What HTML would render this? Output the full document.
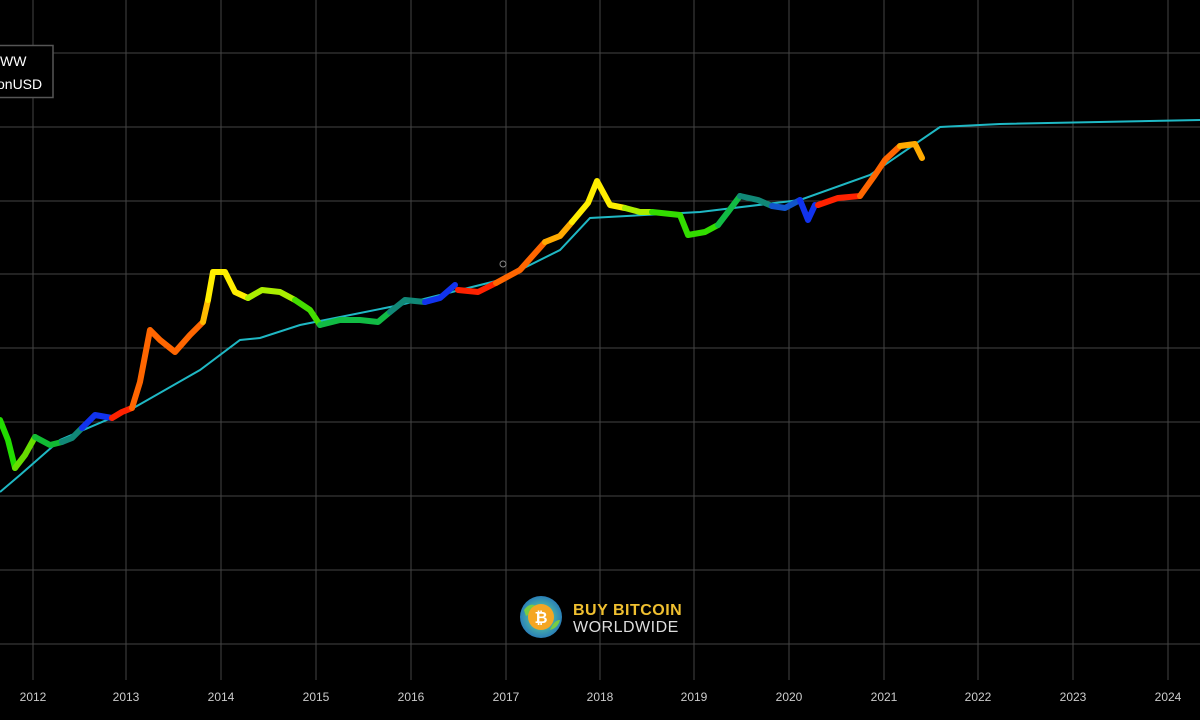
<!DOCTYPE html>
<html><head><style>
html,body{margin:0;padding:0;background:#000;width:1200px;height:720px;overflow:hidden;font-family:"Liberation Sans",sans-serif}
</style></head><body>
<svg width="1200" height="720" xmlns="http://www.w3.org/2000/svg" style="position:absolute;left:0;top:0">
<rect width="1200" height="720" fill="#000"/>
<g stroke="#444" stroke-width="1">
<line x1="33" y1="0" x2="33" y2="680"/><line x1="126" y1="0" x2="126" y2="680"/><line x1="221" y1="0" x2="221" y2="680"/><line x1="316" y1="0" x2="316" y2="680"/><line x1="411" y1="0" x2="411" y2="680"/><line x1="506" y1="0" x2="506" y2="680"/><line x1="600" y1="0" x2="600" y2="680"/><line x1="694" y1="0" x2="694" y2="680"/><line x1="789" y1="0" x2="789" y2="680"/><line x1="884" y1="0" x2="884" y2="680"/><line x1="978" y1="0" x2="978" y2="680"/><line x1="1073" y1="0" x2="1073" y2="680"/><line x1="1168" y1="0" x2="1168" y2="680"/>
<line x1="0" y1="53" x2="1200" y2="53"/><line x1="0" y1="127" x2="1200" y2="127"/><line x1="0" y1="201" x2="1200" y2="201"/><line x1="0" y1="274" x2="1200" y2="274"/><line x1="0" y1="348" x2="1200" y2="348"/><line x1="0" y1="422" x2="1200" y2="422"/><line x1="0" y1="496" x2="1200" y2="496"/><line x1="0" y1="570" x2="1200" y2="570"/><line x1="0" y1="644" x2="1200" y2="644"/>
</g>
<polyline fill="none" stroke="#1fb8c4" stroke-width="2" points="0,492 20,475 60,440 130,410 200,370 240,340 260,338 300,325 400,305 500,280 560,250 590,218 700,212 800,200 870,175 940,127 1000,124 1200,120"/>
<g fill="none" stroke-width="6" stroke-linecap="round" stroke-linejoin="round">
<polyline stroke="#22dd00" points="0,420 8,440 15,468"/>
<polyline stroke="#66dd00" points="15,468 25,455 35,437"/>
<polyline stroke="#11bb33" points="35,437 50,445 62,442"/>
<polyline stroke="#118877" points="62,442 72,438 82,428"/>
<polyline stroke="#1133ee" points="82,428 95,415 112,418"/>
<polyline stroke="#ff2200" points="112,418 122,412 132,408"/>
<polyline stroke="#ff6600" points="132,408 140,382 150,330 160,340 175,352 190,335 203,322"/>
<polyline stroke="#ffbb00" points="203,322 208,300"/>
<polyline stroke="#ffee00" points="208,300 213,272 225,272 235,292 248,298"/>
<polyline stroke="#aaee00" points="248,298 262,290 280,292 295,300"/>
<polyline stroke="#44dd00" points="295,300 310,310 320,325"/>
<polyline stroke="#11bb44" points="320,325 340,320 360,320 378,322 390,312"/>
<polyline stroke="#118877" points="390,312 405,300 425,302"/>
<polyline stroke="#1133ee" points="425,302 440,298 455,285"/>
<polyline stroke="#ff2200" points="458,290 478,292 496,283"/>
<polyline stroke="#ff6600" points="496,283 520,270 545,242"/>
<polyline stroke="#ffaa00" points="545,242 560,236 572,222"/>
<polyline stroke="#ffee00" points="572,222 588,203 597,181 610,205 625,208"/>
<polyline stroke="#aaee00" points="625,208 640,212 652,212"/>
<polyline stroke="#33dd00" points="652,212 680,215 688,235 705,232 718,225"/>
<polyline stroke="#11bb44" points="718,225 728,212 740,196"/>
<polyline stroke="#118877" points="740,196 758,200 772,206"/>
<polyline stroke="#1155cc" points="772,206 785,208 800,200"/>
<polyline stroke="#1133ee" points="800,200 808,220 815,205"/>
<polyline stroke="#ff2200" points="818,205 838,198 860,196"/>
<polyline stroke="#ff6600" points="860,196 875,175 885,160 900,146"/>
<polyline stroke="#ffaa00" points="900,146 915,144 922,158"/>
</g>
<circle cx="503" cy="264" r="3" fill="none" stroke="#888" stroke-width="1"/>
<rect x="-5" y="45.5" width="58" height="52" fill="#000" stroke="#555" stroke-width="1.5"/>
<text x="0" y="66" fill="#fff" font-size="14">WW</text>
<text x="-3" y="89" fill="#fff" font-size="14">onUSD</text>
<g font-size="12" fill="#ccc" text-anchor="middle">
<text x="33" y="701">2012</text><text x="126" y="701">2013</text><text x="221" y="701">2014</text><text x="316" y="701">2015</text><text x="411" y="701">2016</text><text x="506" y="701">2017</text><text x="600" y="701">2018</text><text x="694" y="701">2019</text><text x="789" y="701">2020</text><text x="884" y="701">2021</text><text x="978" y="701">2022</text><text x="1073" y="701">2023</text><text x="1168" y="701">2024</text>
</g>
<defs><radialGradient id="g" cx="0.5" cy="0.5" r="0.5"><stop offset="0.6" stop-color="#4aa"/><stop offset="1" stop-color="#2a7fb8"/></radialGradient></defs>
<circle cx="541" cy="617" r="21" fill="url(#g)"/>
<path d="M524,610 q6,-8 12,-4 q-4,8 -10,10z M550,630 q8,-2 10,-10 q-6,0 -10,10z" fill="#7c4"/>
<circle cx="541" cy="617" r="13" fill="#f5a623"/>
<text x="541" y="623" fill="#fff" font-size="16" font-weight="bold" text-anchor="middle">₿</text>
<text x="573" y="615" fill="#f0c030" font-size="16" font-weight="bold" letter-spacing="0.5">BUY BITCOIN</text>
<text x="573" y="632" fill="#ddd" font-size="16" letter-spacing="0.5">WORLDWIDE</text>
</svg>
</body></html>
